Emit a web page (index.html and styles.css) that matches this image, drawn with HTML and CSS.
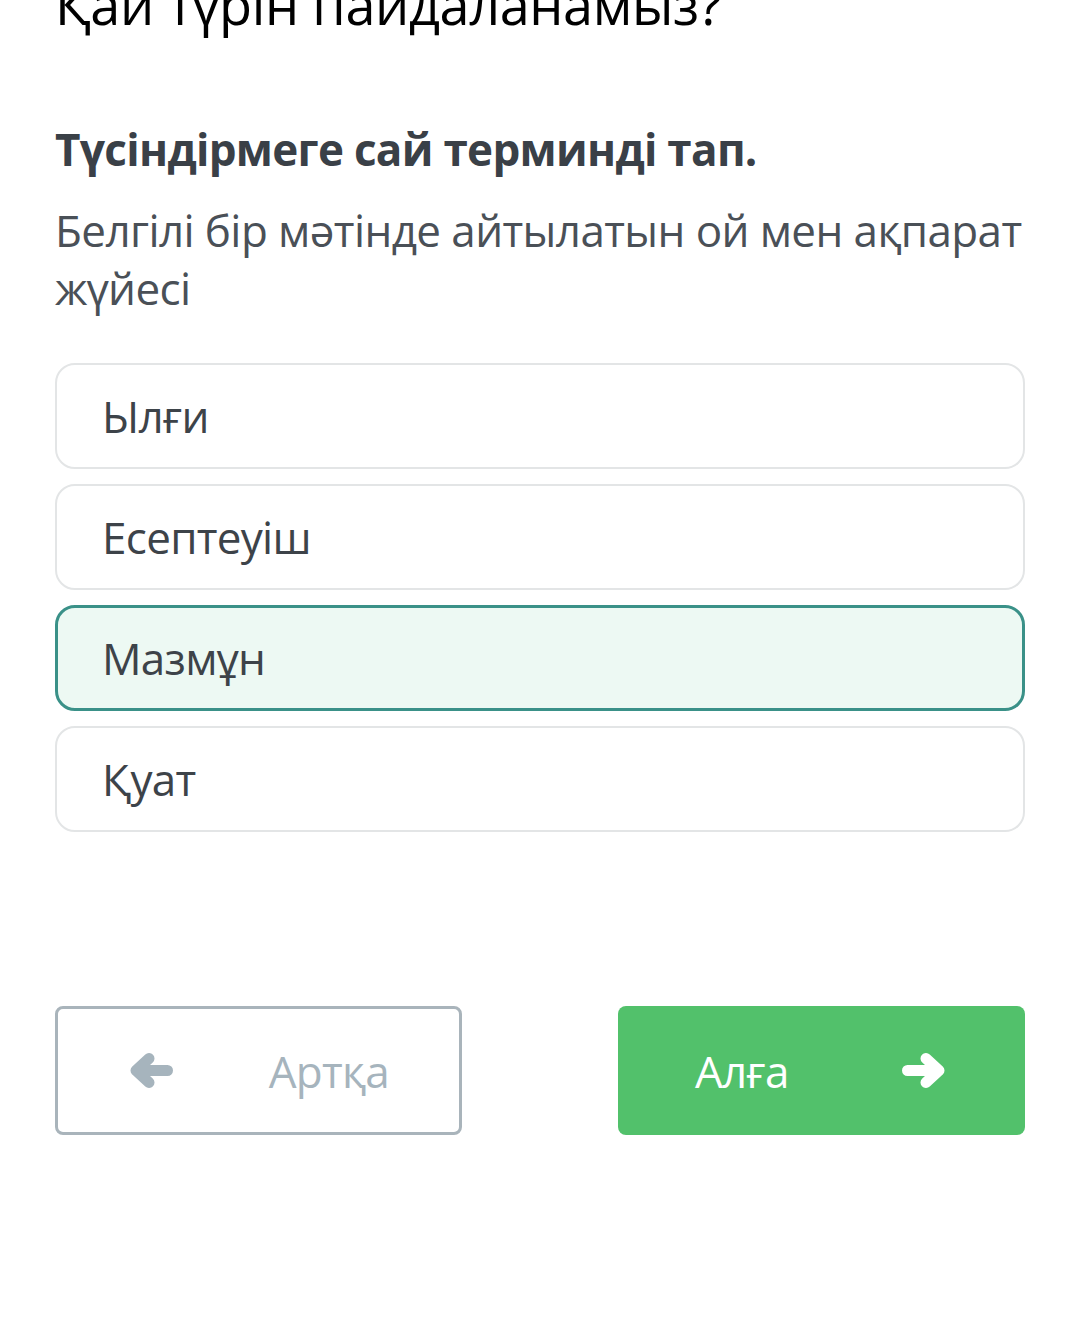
FILE: index.html
```html
<!DOCTYPE html>
<html lang="kk">
<head>
    <meta charset="UTF-8">
    <meta name="viewport" content="width=device-width, initial-scale=1.0">
    <title>Тест</title>
    <link rel="stylesheet" href="styles.css">
</head>
<body>
    <div class="page">
        <p class="prev-question">Қай түрін пайдаланамыз?</p>

        <h2 class="task">Түсіндірмеге сай терминді тап.</h2>
        <p class="question">Белгілі бір мәтінде айтылатын ой мен ақпарат жүйесі</p>

        <div class="options">
            <div class="option">Ылғи</div>
            <div class="option">Есептеуіш</div>
            <div class="option selected">Мазмұн</div>
            <div class="option">Қуат</div>
        </div>

        <div class="nav">
            <button class="btn btn-back">
                <svg class="arrow" viewBox="0 0 43 35"><path d="M37.5 17.5H7M19 5.5L6 17.5L19 29.5"/></svg>
                <span>Артқа</span>
            </button>
            <button class="btn btn-next">
                <span>Алға</span>
                <svg class="arrow" viewBox="0 0 43 35"><path d="M5.5 17.5H36M24 5.5L37 17.5L24 29.5"/></svg>
            </button>
        </div>
    </div>
</body>
</html>
```

FILE: styles.css
```css
body {
    margin: 0;
    background-color: #ffffff;
    font-family: "Open Sans", "Noto Sans", sans-serif;
    letter-spacing: -0.7px;
}
.page {
    padding: 0 55px;
}
.prev-question {
    margin: -26px 0 0;
    font-size: 54px;
    line-height: 60px;
    letter-spacing: -0.4px;
    color: #000000;
}
.task {
    margin: 85px 0 0;
    font-size: 44px;
    line-height: 60px;
    font-weight: 700;
    color: #3a4047;
}
.question {
    margin: 22px 0 0;
    font-size: 44px;
    line-height: 58px;
    letter-spacing: -0.6px;
    color: #4a5057;
}
.options {
    margin-top: 46px;
    display: flex;
    flex-direction: column;
    gap: 15px;
}
.option {
    height: 106px;
    box-sizing: border-box;
    border: 2px solid #e3e5e6;
    border-radius: 20px;
    padding-left: 45px;
    display: flex;
    align-items: center;
    font-size: 44px;
    color: #3d4349;
}
.option.selected {
    border: 3px solid #3a9188;
    background-color: #edf9f3;
    padding-left: 44px;
}
.nav {
    margin-top: 174px;
    display: flex;
    justify-content: space-between;
}
.btn {
    width: 407px;
    height: 129px;
    box-sizing: border-box;
    border-radius: 8px;
    display: flex;
    align-items: center;
    justify-content: space-between;
    font-family: inherit;
    letter-spacing: inherit;
    font-size: 44px;
}
.btn-back {
    background-color: #ffffff;
    border: 3px solid #a9b4bb;
    color: #a6b4bd;
    padding: 0 70px 0 72px;
}
.btn-next {
    background-color: #52c16b;
    border: none;
    color: #ffffff;
    padding: 0 80px 0 77px;
}
.arrow {
    width: 43px;
    height: 35px;
    fill: none;
    stroke: currentColor;
    stroke-width: 11;
    stroke-linecap: round;
    stroke-linejoin: round;
}
```
